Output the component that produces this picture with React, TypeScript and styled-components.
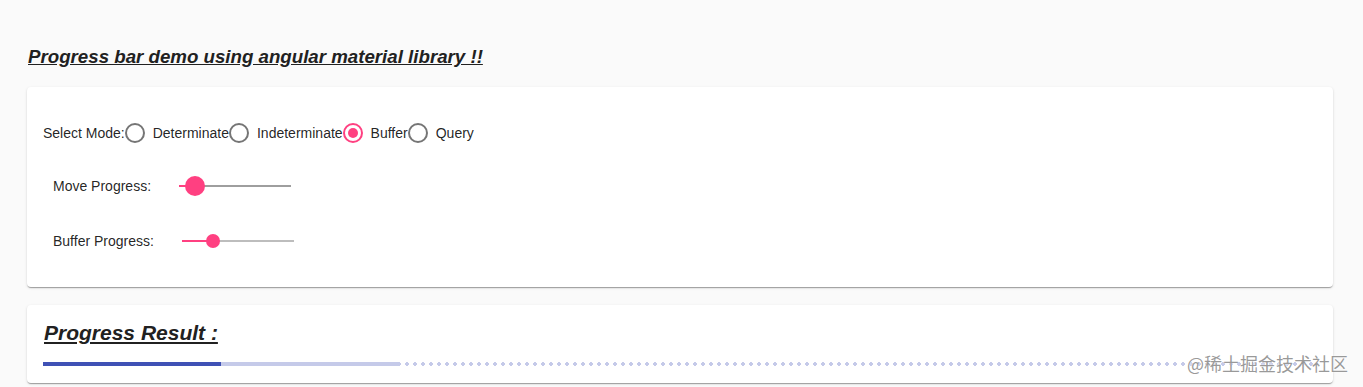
import React, { useState } from 'react'
import styled, { createGlobalStyle } from 'styled-components'

const GlobalStyle = createGlobalStyle`
  html, body {
    margin: 0;
    padding: 0;
    background: #fafafa;
    font-family: "Liberation Sans", Arial, sans-serif;
    color: rgba(0, 0, 0, 0.87);
  }
`

const PINK = '#ff4081'
const INDIGO = '#3f51b5'

const Page = styled.div`
  position: relative;
  padding: 46px 30px 0 27px;
  height: 387px;
  box-sizing: border-box;
  overflow: hidden;
`

const PageTitle = styled.h1`
  margin: 0 0 19px 1px;
  font-size: 18.7px;
  line-height: 22px;
  font-weight: bold;
  font-style: italic;
  text-decoration: underline;
  color: #212121;
`

const Card = styled.div<{ $gap?: number; $bottom?: number }>`
  background: #fff;
  border-radius: 4px;
  padding: 16px 16px ${({ $bottom }) => $bottom ?? 16}px;
  margin-bottom: ${({ $gap }) => $gap ?? 0}px;
  box-shadow: 0 2px 1px -1px rgba(0, 0, 0, 0.2), 0 1px 1px 0 rgba(0, 0, 0, 0.14),
    0 1px 3px 0 rgba(0, 0, 0, 0.12);
`

const ModeRow = styled.section`
  display: flex;
  align-items: center;
  height: 20px;
  margin-top: 20px;
  font-size: 14px;
`

const Label = styled.label<{ $indent?: number }>`
  margin-left: ${({ $indent }) => $indent ?? 0}px;
  font-size: 14px;
  color: rgba(0, 0, 0, 0.87);
`

const RadioItem = styled.label`
  display: flex;
  align-items: center;
  cursor: pointer;
`

const RadioCircle = styled.span<{ $checked: boolean }>`
  position: relative;
  width: 20px;
  height: 20px;
  box-sizing: border-box;
  border-radius: 50%;
  border: 2px solid ${({ $checked }) => ($checked ? PINK : 'rgba(0, 0, 0, 0.54)')};
  margin-right: 8px;

  &::after {
    content: '';
    position: absolute;
    left: 3px;
    top: 3px;
    width: 10px;
    height: 10px;
    border-radius: 50%;
    background: ${PINK};
    display: ${({ $checked }) => ($checked ? 'block' : 'none')};
  }
`

const SliderRow = styled.section<{ $top: number }>`
  display: flex;
  align-items: center;
  height: 48px;
  margin-top: ${({ $top }) => $top}px;
`

const Slider = styled.div<{ $left: number }>`
  position: relative;
  width: 112px;
  height: 48px;
  margin-left: ${({ $left }) => $left}px;
  cursor: pointer;
`

const Track = styled.div<{ $dark?: boolean }>`
  position: absolute;
  left: 0;
  right: 0;
  top: 23px;
  height: 2px;
  background: ${({ $dark }) => ($dark ? 'rgba(0, 0, 0, 0.38)' : 'rgba(0, 0, 0, 0.26)')};
`

const TrackFill = styled.div`
  position: absolute;
  left: 0;
  top: 0;
  height: 100%;
  background: ${PINK};
`

const Thumb = styled.div<{ $size: number }>`
  position: absolute;
  top: 24px;
  width: ${({ $size }) => $size}px;
  height: ${({ $size }) => $size}px;
  border-radius: 50%;
  background: ${PINK};
  transform: translate(-50%, -50%);
`

const ResultTitle = styled.h2`
  margin: 0 0 17px 1px;
  font-size: 21px;
  line-height: 24px;
  font-weight: bold;
  font-style: italic;
  text-decoration: underline;
  color: #212121;
`

const Bar = styled.div`
  position: relative;
  height: 4px;
  overflow: hidden;
  background-image: radial-gradient(circle, #c5cae9 0, #c5cae9 1.6px, transparent 1.9px);
  background-size: 8px 4px;
  background-position: 0 0;
`

const BarBuffer = styled.div`
  position: absolute;
  left: 0;
  top: 0;
  height: 100%;
  background: #c5cae9;
`

const BarValue = styled.div`
  position: absolute;
  left: 0;
  top: 0;
  height: 100%;
  background: ${INDIGO};
`

const Watermark = styled.div`
  position: absolute;
  right: 15px;
  bottom: 13px;
  font-family: "Noto Sans CJK SC", "Liberation Sans", sans-serif;
  font-size: 18px;
  line-height: 22px;
  color: rgba(120, 120, 120, 0.75);
  text-shadow: 0 0 2px #fff, 0 0 1px #fff;
  pointer-events: none;
`

const modes = ['Determinate', 'Indeterminate', 'Buffer', 'Query']

const App = () => {
  const [mode, setMode] = useState('Buffer')
  const value = 14
  const buffer = 28

  return (
    <>
      <GlobalStyle />
      <Page>
        <PageTitle>Progress bar demo using angular material library !!</PageTitle>

        <Card $gap={18} $bottom={22}>
          <ModeRow>
            <Label>Select Mode:</Label>
            {modes.map(m => (
              <RadioItem key={m} onClick={() => setMode(m)}>
                <RadioCircle $checked={mode === m} />
                {m}
              </RadioItem>
            ))}
          </ModeRow>

          <SliderRow $top={19}>
            <Label $indent={10}>Move Progress:</Label>
            <Slider $left={28}>
              <Track $dark>
                <TrackFill style={{ width: `${value}%` }} />
              </Track>
              <Thumb $size={20} style={{ left: `${value}%` }} />
            </Slider>
          </SliderRow>

          <SliderRow $top={7}>
            <Label $indent={10}>Buffer Progress:</Label>
            <Slider $left={28}>
              <Track>
                <TrackFill style={{ width: `${buffer}%` }} />
              </Track>
              <Thumb $size={14} style={{ left: `${buffer}%` }} />
            </Slider>
          </SliderRow>
        </Card>

        <Card $bottom={17}>
          <ResultTitle>Progress Result :</ResultTitle>
          <Bar>
            <BarBuffer style={{ width: `${buffer}%` }} />
            <BarValue style={{ width: `${value}%` }} />
          </Bar>
        </Card>

        <Watermark>@稀土掘金技术社区</Watermark>
      </Page>
    </>
  )
}

export default App
